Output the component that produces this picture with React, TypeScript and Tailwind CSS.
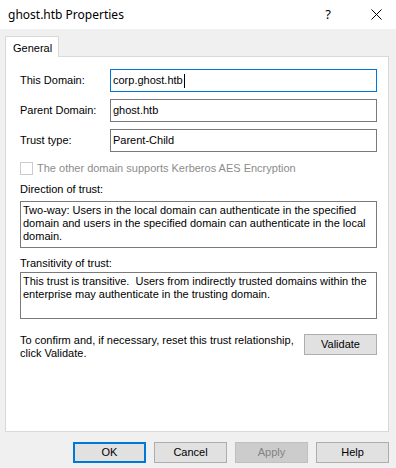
const font = "font-['Liberation_Sans',Arial,sans-serif]";

const Field = ({ label, value, focused }: { label: string; value: string; focused?: boolean }) => {
  return (
    <div className="flex items-center h-[23px]">
      <div className="w-[90px] text-[11px]">{label}</div>
      <div
        className={
          focused
            ? "w-[267px] h-[23px] border border-[#0078d7] bg-white flex items-center pl-[2px] text-[11px]"
            : "w-[267px] h-[23px] border border-[#7a7a7a] bg-white flex items-center pl-[2px] text-[11px]"
        }
      >
        {value}
        {focused && <span className="inline-block w-px h-[14px] bg-black ml-[1px]" />}
      </div>
    </div>
  );
};

const Btn = ({ children, variant }: { children: string; variant?: "default" | "disabled" }) => {
  if (variant === "default")
    return (
      <div className="w-[73px] h-[21px] border-2 border-[#0078d7] bg-[#e1e1e1] flex items-center justify-center text-[11px]">
        {children}
      </div>
    );
  if (variant === "disabled")
    return (
      <div className="w-[73px] h-[21px] border border-[#bfbfbf] bg-[#cccccc] flex items-center justify-center text-[11px] text-[#838383]">
        {children}
      </div>
    );
  return (
    <div className="w-[73px] h-[21px] border border-[#adadad] bg-[#e1e1e1] flex items-center justify-center text-[11px]">
      {children}
    </div>
  );
};

const App = () => {
  return (
    <div className={`w-[396px] h-[468px] bg-[#f0f0f0] flex flex-col text-black ${font}`}>
      {/* title bar */}
      <div className="h-[29px] bg-white flex items-center pl-2 pr-[14px]">
        <div className="font-['Noto_Sans',sans-serif] text-[12px] flex-1">ghost.htb Properties</div>
        <div className="font-['Noto_Sans',sans-serif] text-[13px] mr-[40px]">?</div>
        <svg width="11" height="11" viewBox="0 0 11 11">
          <path d="M0.5 0.5 L10.5 10.5 M10.5 0.5 L0.5 10.5" stroke="#000" strokeWidth="1" />
        </svg>
      </div>

      {/* tab strip */}
      <div className="pl-[5px] pt-[7px] flex">
        <div className="relative z-10 w-[54px] h-[21px] -mb-px bg-white border border-b-0 border-[#d9d9d9] pt-[3px] pl-[7px] text-[11px]">
          General
        </div>
      </div>

      {/* panel */}
      <div className="mx-[5px] w-[384px] h-[376px] bg-white border border-[#d9d9d9] pl-[14px] pt-[12px] pr-[11px]">
        <div className="flex flex-col gap-[7px]">
          <Field label="This Domain:" value="corp.ghost.htb" focused />
          <Field label="Parent Domain:" value="ghost.htb" />
          <Field label="Trust type:" value="Parent-Child" />
        </div>

        <div className="flex items-center mt-[10px] h-[13px]">
          <div className="w-[13px] h-[13px] border border-[#cccccc] bg-white" />
          <span className="ml-[4px] text-[11px] text-[#8c8c8c]">The other domain supports Kerberos AES Encryption</span>
        </div>

        <div className="mt-[8px] text-[11px] leading-[13px]">Direction of trust:</div>
        <div className="mt-[5px] w-[357px] h-[47px] border border-[#7a7a7a] px-[2px] pt-[2px] text-[11px] leading-[13px]">
          Two-way: Users in the local domain can authenticate in the specified domain and users in the specified
          domain can authenticate in the local domain.
        </div>

        <div className="mt-[9px] text-[11px] leading-[13px]">Transitivity of trust:</div>
        <div className="mt-[2px] w-[357px] h-[47px] border border-[#7a7a7a] px-[2px] pt-[2px] text-[11px] leading-[13px] whitespace-pre">
          {"This trust is transitive.  Users from indirectly trusted domains within the\nenterprise may authenticate in the trusting domain."}
        </div>

        <div className="mt-[15px] flex items-start">
          <div className="flex-1 text-[11px] leading-[13px]">
            To confirm and, if necessary, reset this trust relationship,
            <br />
            click Validate.
          </div>
          <div className="w-[73px] h-[21px] border border-[#adadad] bg-[#e1e1e1] flex items-center justify-center text-[11px]">
            Validate
          </div>
        </div>
      </div>

      {/* buttons */}
      <div className="flex justify-end gap-[8px] pr-[7px] mt-[10px]">
        <Btn variant="default">OK</Btn>
        <Btn>Cancel</Btn>
        <Btn variant="disabled">Apply</Btn>
        <Btn>Help</Btn>
      </div>
    </div>
  );
};

export default App;
